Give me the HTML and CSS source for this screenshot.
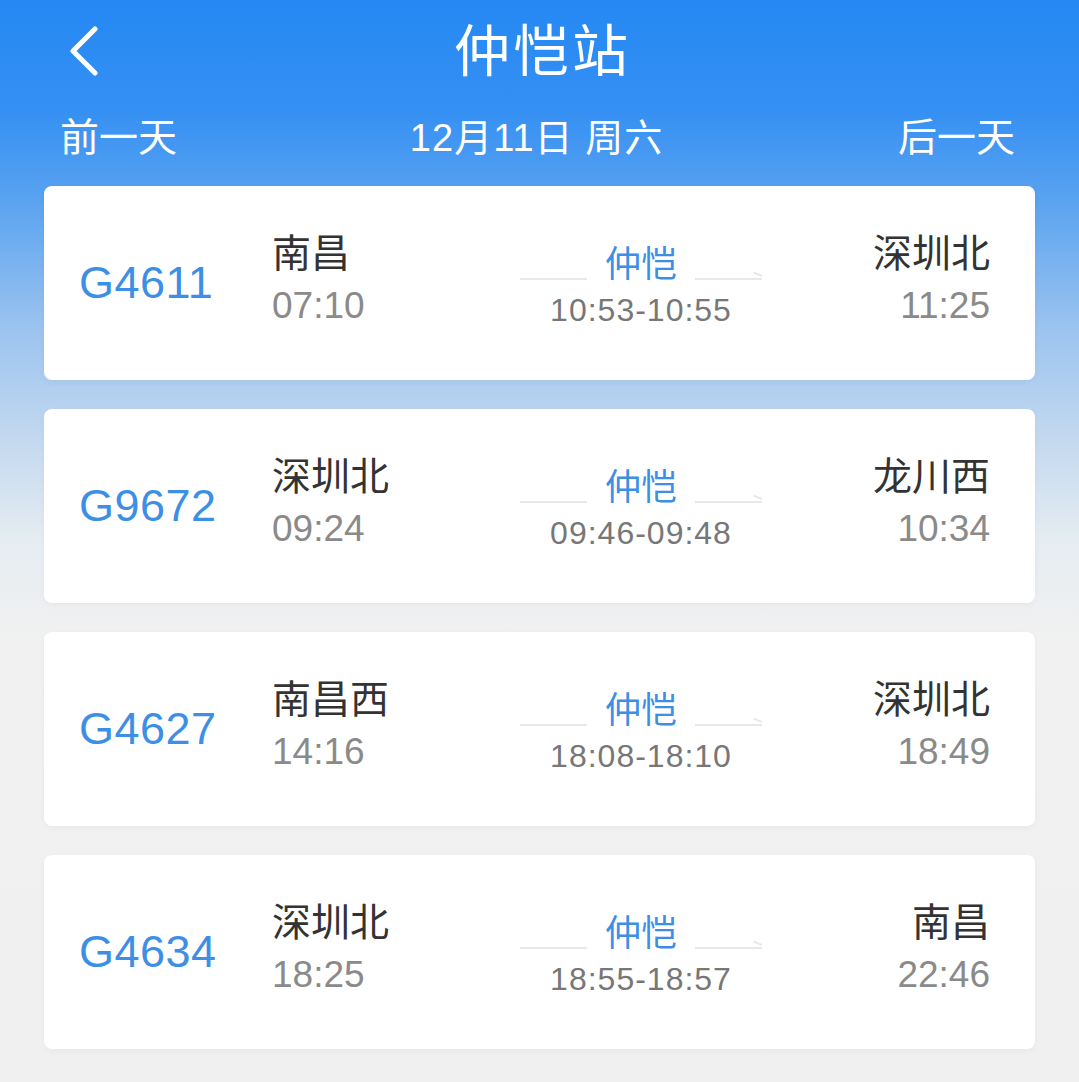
FILE: index.html
```html
<!DOCTYPE html>
<html lang="zh-CN">
<head>
  <meta charset="UTF-8">
  <meta name="viewport" content="width=device-width, initial-scale=1.0">
  <title>仲恺站</title>
  <link rel="stylesheet" href="styles.css">
</head>
<body>
  <header class="top">
    <a class="back" href="#">
      <svg width="32" height="50" viewBox="0 0 32 50"><path d="M27 3 L5 25 L27 47" fill="none" stroke="#fff" stroke-width="5" stroke-linecap="round" stroke-linejoin="round"/></svg>
    </a>
    <h1>仲恺站</h1>
  </header>
  <nav class="days">
    <span>前一天</span>
    <span class="today">12月11日 周六</span>
    <span>后一天</span>
  </nav>

  <ul class="list">
    <li class="card">
      <div class="num">G4611</div>
      <div class="from"><p class="st">南昌</p><p class="tm">07:10</p></div>
      <div class="mid">
        <div class="route"><i class="line"></i><span>仲恺</span><i class="line arrow"></i></div>
        <p class="stay">10:53-10:55</p>
      </div>
      <div class="to"><p class="st">深圳北</p><p class="tm">11:25</p></div>
    </li>
    <li class="card">
      <div class="num">G9672</div>
      <div class="from"><p class="st">深圳北</p><p class="tm">09:24</p></div>
      <div class="mid">
        <div class="route"><i class="line"></i><span>仲恺</span><i class="line arrow"></i></div>
        <p class="stay">09:46-09:48</p>
      </div>
      <div class="to"><p class="st">龙川西</p><p class="tm">10:34</p></div>
    </li>
    <li class="card">
      <div class="num">G4627</div>
      <div class="from"><p class="st">南昌西</p><p class="tm">14:16</p></div>
      <div class="mid">
        <div class="route"><i class="line"></i><span>仲恺</span><i class="line arrow"></i></div>
        <p class="stay">18:08-18:10</p>
      </div>
      <div class="to"><p class="st">深圳北</p><p class="tm">18:49</p></div>
    </li>
    <li class="card">
      <div class="num">G4634</div>
      <div class="from"><p class="st">深圳北</p><p class="tm">18:25</p></div>
      <div class="mid">
        <div class="route"><i class="line"></i><span>仲恺</span><i class="line arrow"></i></div>
        <p class="stay">18:55-18:57</p>
      </div>
      <div class="to"><p class="st">南昌</p><p class="tm">22:46</p></div>
    </li>
  </ul>
</body>
</html>
```

FILE: styles.css
```css
* {
  margin: 0;
  padding: 0;
  box-sizing: border-box;
}

body {
  width: 1079px;
  min-height: 1082px;
  font-family: "Liberation Sans", "Noto Sans CJK SC", sans-serif;
  background: linear-gradient(180deg, #2588f3 0px, #3590f3 110px, #55a0f0 190px, #9cc4ef 330px, #c0d7ef 430px, #e6ecf2 540px, #f1f1f1 640px, #f0f0f0 1082px);
  overflow: hidden;
}

.top {
  height: 96px;
  display: flex;
  align-items: center;
  justify-content: center;
  position: relative;
}

.back {
  position: absolute;
  left: 68px;
  top: 26px;
}

.top h1 {
  color: #fff;
  font-size: 56px;
  font-weight: 400;
  letter-spacing: 3px;
  font-family: "Noto Sans CJK SC", sans-serif;
  margin-top: -4px;
  margin-left: 6px;
}

.days {
  display: flex;
  justify-content: space-between;
  align-items: center;
  height: 84px;
  padding: 0 64px 8px 60px;
  color: #fff;
  font-size: 39px;
  font-family: "Noto Sans CJK SC", sans-serif;
}

.days .today {
  font-family: "Liberation Sans", "Noto Sans CJK SC", sans-serif;
  font-size: 38px;
  letter-spacing: 1px;
  margin-left: -2px;
}

.list {
  list-style: none;
  padding: 6px 44px 0;
  display: flex;
  flex-direction: column;
  gap: 29px;
}

.card {
  height: 194px;
  background: #fff;
  border-radius: 8px;
  display: grid;
  grid-template-columns: 193px 248px 242px 1fr;
  align-items: center;
  padding: 0 45px 0 35px;
  box-shadow: 0 2px 6px rgba(0, 0, 0, 0.04);
}

.num {
  color: #3d8fe6;
  font-size: 45px;
  letter-spacing: 0.5px;
}

.st {
  color: #333;
  font-size: 39px;
  line-height: 48px;
  font-family: "Noto Sans CJK SC", sans-serif;
  font-weight: 400;
}

.tm {
  color: #8a8a8a;
  font-size: 37px;
  line-height: 46px;
  margin-top: 9px;
}

.from {
  margin-top: -11px;
}

.to {
  text-align: right;
  margin-top: -11px;
}

.mid {
  text-align: center;
  margin-top: 2px;
}

.route {
  display: flex;
  align-items: flex-end;
  justify-content: space-between;
  height: 46px;
}

.route span {
  color: #3d8fe6;
  font-size: 36px;
  line-height: 46px;
  font-family: "Noto Sans CJK SC", sans-serif;
}

.line {
  display: block;
  width: 67px;
  height: 2px;
  background: #e8e8e8;
  margin-bottom: 4px;
  position: relative;
}

.line.arrow::after {
  content: "";
  position: absolute;
  right: 0;
  top: -3px;
  width: 9px;
  height: 2px;
  background: #e8e8e8;
  transform: rotate(22deg);
  transform-origin: right center;
}

.stay {
  color: #777;
  font-size: 32px;
  line-height: 40px;
  letter-spacing: 1px;
  margin-top: 6px;
}
```
